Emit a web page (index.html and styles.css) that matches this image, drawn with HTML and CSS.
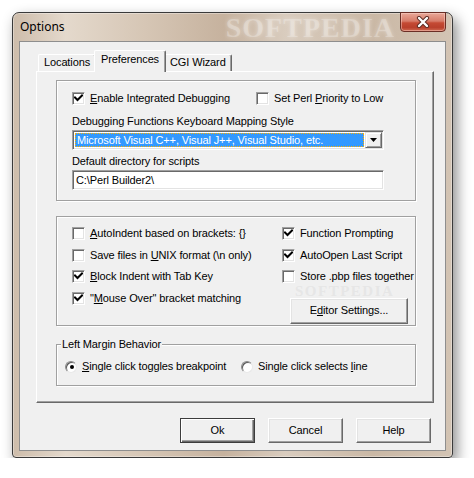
FILE: index.html
```html
<!DOCTYPE html>
<html>
<head>
<meta charset="utf-8">
<link rel="stylesheet" href="styles.css">
</head>
<body>
<div class="window">
  <div class="titlebar">
    <span class="title">Options</span>
    <span class="wm">SOFTPEDIA</span>
    <div class="close">
      <svg width="14" height="12" viewBox="0 0 14 12">
        <path d="M3 2 L11 10 M11 2 L3 10" stroke="#5a2a22" stroke-width="4.2" stroke-linecap="round"/>
        <path d="M3 2 L11 10 M11 2 L3 10" stroke="#fff" stroke-width="2.4" stroke-linecap="round"/>
      </svg>
    </div>
  </div>
  <div class="client">
    <div class="tabs">
      <div class="tab">Locations</div>
      <div class="tab active">Preferences</div>
      <div class="tab">CGI Wizard</div>
    </div>
    <div class="panel">
      <div class="group g1">
        <div class="row1">
          <label class="chk w184"><span class="box on"></span><span><u>E</u>nable Integrated Debugging</span></label>
          <label class="chk"><span class="box"></span><span>Set Perl <u>P</u>riority to Low</span></label>
        </div>
        <div class="lbl l1">Debugging Functions Keyboard Mapping Style</div>
        <div class="combo">
          <div class="combo-sel"><span>Microsoft Visual C++, Visual J++, Visual Studio, etc.</span></div>
          <div class="combo-btn"><svg width="7" height="4" viewBox="0 0 7 4"><path d="M0 0H7L3.5 4Z" fill="#000"/></svg></div>
        </div>
        <div class="lbl l2">Default directory for scripts</div>
        <div class="edit">C:\Perl Builder2\</div>
      </div>

      <div class="group g2">
        <div class="col c1">
          <label class="chk"><span class="box"></span><span><u>A</u>utoIndent based on brackets: {}</span></label>
          <label class="chk"><span class="box"></span><span>Save files in <u>U</u>NIX format (\n only)</span></label>
          <label class="chk"><span class="box on"></span><span><u>B</u>lock Indent with Tab Key</span></label>
          <label class="chk"><span class="box on"></span><span>"<u>M</u>ouse Over" bracket matching</span></label>
        </div>
        <div class="col c2">
          <label class="chk"><span class="box on"></span><span>Function Prompting</span></label>
          <label class="chk"><span class="box on"></span><span>AutoOpen Last Script</span></label>
          <label class="chk"><span class="box"></span><span>Store .pbp files together</span></label>
          <div class="btn editor">E<u>d</u>itor Settings...</div>
        </div>
        <div class="wm2">SOFTPEDIA</div>
      </div>

      <fieldset class="g3">
        <legend>Left Margin Behavior</legend>
        <div class="radios">
          <label class="rad w176"><span class="circ on"></span><span><u>S</u>ingle click toggles breakpoint</span></label>
          <label class="rad"><span class="circ"></span><span>Single click selects <u>l</u>ine</span></label>
        </div>
      </fieldset>
    </div>
    <div class="buttons">
      <div class="btn def">Ok</div>
      <div class="btn">Cancel</div>
      <div class="btn">Help</div>
    </div>
  </div>
</div>
</body>
</html>
```
FILE: styles.css
```css
* { box-sizing: border-box; }
body {
  margin: 0;
  background: #fff;
  font-family: "Liberation Sans", Arial, sans-serif;
  font-size: 11px;
  letter-spacing: -0.12px;
  color: #000;
}
u { text-decoration: underline; text-underline-offset: 1px; }

.window {
  margin: 12px 0 0 12px;
  width: 441px;
  height: 446px;
  border: 1px solid #3a3a3a;
  border-radius: 7px 7px 4px 4px;
  padding: 0 6px 6px 6px;
  background: linear-gradient(90deg, #cdbcaa 0%, #e4d9cc 12%, #d6c6b5 30%, #c6b29e 48%, #d9ccbe 62%, #cab8a5 82%, #d3c4b4 100%);
  box-shadow: 4px 6px 14px rgba(0,0,0,0.45), inset 0 0 0 1px rgba(255,255,255,0.35);
}

.titlebar {
  height: 28px;
  display: flex;
  align-items: flex-start;
}
.title {
  font-family: "Noto Sans", "Open Sans", sans-serif;
  font-size: 12px;
  letter-spacing: 0;
  padding: 6px 0 0 1px;
  line-height: 16px;
}
.wm {
  margin-left: auto;
  margin-right: 5px;
  margin-top: 2px;
  font-family: "Liberation Serif", serif;
  font-weight: bold;
  font-size: 28px;
  letter-spacing: 1px;
  color: rgba(255,255,255,0.26);
  line-height: 26px;
  text-shadow: 0 0 4px rgba(255,255,255,0.35);
}
.close {
  width: 46px;
  height: 20px;
  margin-top: -1px;
  border: 1px solid #6b2e25;
  border-radius: 0 0 4px 4px;
  background: linear-gradient(180deg, #e9a898 0%, #d77c6a 45%, #c54a34 55%, #b9402c 80%, #d06a52 100%);
  box-shadow: inset 0 0 0 1px rgba(255,220,210,0.45);
  display: flex;
  align-items: center;
  justify-content: center;
}

.client {
  height: 410px;
  background: #f0f0f0;
  border: 1px solid #8e8e8e;
  padding: 8px 11px 0 16px;
}

.tabs {
  display: flex;
  align-items: flex-end;
  height: 21px;
  padding-left: 2px;
}
.tab {
  height: 17px;
  line-height: 15px;
  padding: 0 5px;
  border: 1px solid #fff;
  border-right-color: #696969;
  border-bottom: none;
  border-radius: 2px 2px 0 0;
  box-shadow: inset -1px 0 #a0a0a0;
  background: #f0f0f0;
  white-space: nowrap;
}
.tab.active {
  height: 22px;
  margin: 0 -2px -1px -2px;
  padding: 0 6px;
  line-height: 16px;
  position: relative;
  z-index: 1;
}
.tab.active + .tab { padding-left: 5px; }

.panel {
  width: 398px;
  height: 332px;
  border: 1px solid #fff;
  border-right-color: #696969;
  border-bottom-color: #696969;
  box-shadow: inset -1px -1px #a0a0a0;
  padding: 8px 0 0 19px;
}

.group {
  width: 360px;
  border: 1px solid #a0a0a0;
  box-shadow: inset 1px 1px #fff, 1px 1px #fff;
}
.g1 {
  height: 121px;
  padding: 11px 0 0 15px;
}
.row1 { display: flex; }
.w184 { width: 184px; }
.chk {
  display: flex;
  align-items: center;
  gap: 5px;
  height: 13px;
  line-height: 13px;
  white-space: nowrap;
}
.box {
  width: 13px;
  height: 13px;
  flex: none;
  background: #fff;
  border: 1px solid;
  border-color: #a0a0a0 #fff #fff #a0a0a0;
  box-shadow: inset 1px 1px #696969, inset -1px -1px #e3e3e3;
}
.box.on {
  background: #fff url("data:image/svg+xml;utf8,<svg xmlns='http://www.w3.org/2000/svg' width='11' height='11' viewBox='0 0 11 11'><path d='M2 4.5 L4.5 7 L9 2.5' stroke='black' stroke-width='2' fill='none' stroke-linecap='square'/></svg>") no-repeat 0 0;
}
.lbl { line-height: 13px; height: 13px; }
.l1 { margin-top: 10px; }
.l2 { margin-top: 5px; }

.combo {
  margin-top: 2px;
  width: 312px;
  height: 20px;
  display: flex;
  background: #fff;
  border: 1px solid;
  border-color: #a0a0a0 #fff #fff #a0a0a0;
  box-shadow: inset 1px 1px #696969, inset -1px -1px #e3e3e3;
  padding: 2px;
}
.combo-sel {
  flex: 1;
  background: #3399ff;
  color: #fff;
  outline: 1px dotted #ffb000;
  outline-offset: -1px;
  line-height: 14px;
  padding-left: 2px;
  white-space: nowrap;
  overflow: hidden;
}
.combo-btn {
  width: 17px;
  margin: -1px -1px -1px 1px;
  background: #f0f0f0;
  border: 1px solid;
  border-color: #e3e3e3 #696969 #696969 #e3e3e3;
  box-shadow: inset 1px 1px #fff, inset -1px -1px #a0a0a0;
  display: flex;
  align-items: center;
  justify-content: center;
}
.edit {
  margin-top: 2px;
  width: 312px;
  height: 20px;
  background: #fff;
  border: 1px solid;
  border-color: #a0a0a0 #fff #fff #a0a0a0;
  box-shadow: inset 1px 1px #696969, inset -1px -1px #e3e3e3;
  padding: 2px 0 0 3px;
  line-height: 14px;
}

.g2 {
  margin-top: 15px;
  height: 110px;
  padding: 10px 0 0 15px;
  display: flex;
  position: relative;
}
.col {
  display: flex;
  flex-direction: column;
  gap: 8.5px;
}
.c1 { width: 210px; }
.btn {
  width: 75px;
  height: 25px;
  background: #f0f0f0;
  border: 1px solid;
  border-color: #fff #696969 #696969 #fff;
  box-shadow: inset -1px -1px #a0a0a0, inset 1px 1px #e3e3e3;
  display: flex;
  align-items: center;
  justify-content: center;
  line-height: 13px;
}
.btn.editor {
  width: 118px;
  height: 26px;
  margin: 6px 0 0 8px;
}
.wm2 {
  position: absolute;
  left: 238px;
  top: 69px;
  font-family: "Liberation Serif", serif;
  font-weight: bold;
  font-size: 15px;
  letter-spacing: 1.5px;
  color: rgba(205,205,205,0.3);
  line-height: 11px;
  pointer-events: none;
}

.g3 {
  margin: 12px 0 0 0;
  width: 360px;
  height: 48px;
  padding: 0;
  border: 1px solid #a0a0a0;
  box-shadow: inset 1px 1px #fff, 1px 1px #fff;
  min-width: 0;
}
.g3 legend {
  margin-left: 4px;
  padding: 0 1px;
  line-height: 13px;
  background: #f0f0f0;
}
.radios {
  display: flex;
  padding: 9px 0 0 8px;
}
.w176 { width: 176px; }
.rad {
  display: flex;
  align-items: center;
  gap: 5px;
  height: 13px;
  line-height: 13px;
  white-space: nowrap;
}
.circ {
  width: 12px;
  height: 12px;
  flex: none;
  border-radius: 50%;
  background: #fff;
  border: 1px solid;
  border-color: #8a8a8a #e8e8e8 #e8e8e8 #8a8a8a;
  box-shadow: inset 1px 1px #5a5a5a;
  display: flex;
  align-items: center;
  justify-content: center;
}
.circ.on::after {
  content: "";
  width: 4px;
  height: 4px;
  border-radius: 50%;
  background: #000;
  margin: 1px 0 0 1px;
}

.buttons {
  display: flex;
  justify-content: flex-end;
  gap: 13px;
  margin: 15px 3px 0 0;
}
.btn.def {
  border-color: #3c3c3c;
  box-shadow: inset 1px 1px #fff, inset -1px -1px #696969, inset -2px -2px #a0a0a0;
}
```
